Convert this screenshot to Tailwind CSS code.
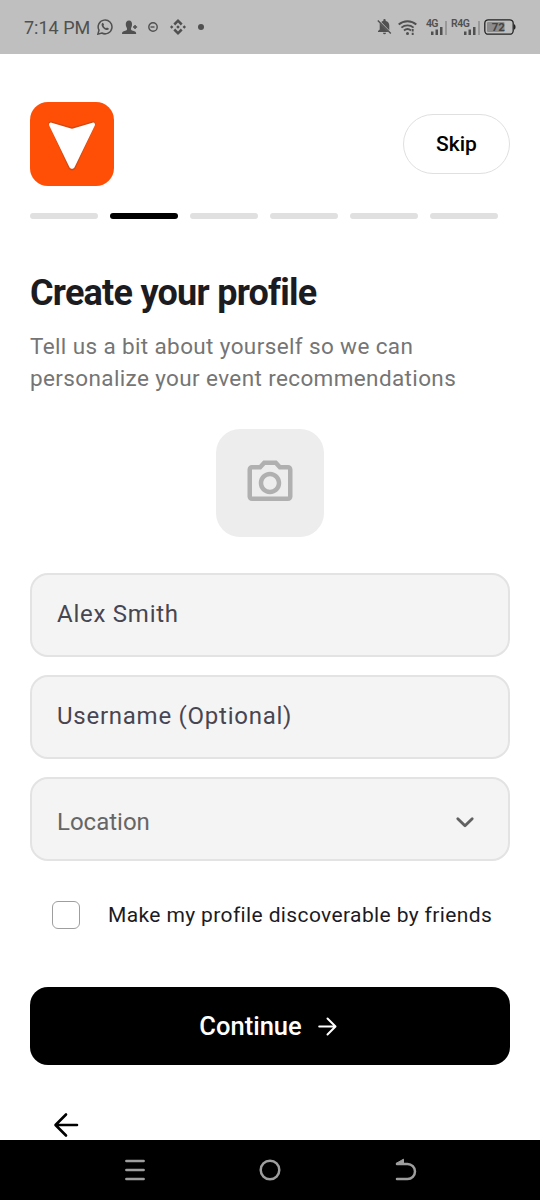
<!DOCTYPE html>
<html lang="en">
<head>
<meta charset="utf-8">
<meta name="viewport" content="width=device-width, initial-scale=1">
<title>Create your profile</title>
<script src="https://cdn.jsdelivr.net/npm/@tailwindcss/browser@4"></script>
</head>
<body class="bg-white">
<div class="flex h-[1200px] w-[540px] flex-col overflow-hidden bg-white font-['Roboto',sans-serif]">

  <!-- Status bar -->
  <header class="flex h-[54px] shrink-0 items-center justify-between bg-[#bfbfbf] pl-6 pr-[23px] text-[#505050]">
    <div class="flex items-center">
      <span class="w-[73px] pt-0.5 whitespace-nowrap text-[18px] leading-none">7:14 PM</span>
      <svg class="h-4 w-4" viewBox="0 0 16 16" fill="none" stroke="currentColor" stroke-width="1.500"><path d="M.9 15.100l1.100-3.900A6.900 6.900 0 1 1 4.800 14z"/><path d="M5 4.200l1-.5 1.100 2-.6 1c.5 1.100 1.300 1.900 2.500 2.500l1-.8 1.900 1-.3 1.200c-1.200 1-3.200.3-5-1.200C4.800 7.800 4 5.700 5 4.200z" fill="currentColor" stroke="none"/></svg>
      <svg class="ml-[9px] h-4 w-4" viewBox="0 0 16 16" fill="currentColor"><path d="M7 1.500c2.200 0 3.200 1.600 3 4.300C9.900 7.500 9.300 8.500 9 9.500c-.1 1.500.4 2 2 2.300 2.200.6 3.200 1 3.200 3.200H0c0-2.200 1-2.600 3.100-3.200 1.600-.3 2.100-.8 1.900-2.300-.3-1-1.100-2-1.200-3.700C3.600 3.100 4.800 1.500 7 1.500z"/><path d="M11 7.200h1.300V6h1.500v1.200h1.300v1.500h-1.300v1.300h-1.500V8.700H11z"/></svg>
      <svg class="ml-[10px] h-[10px] w-[10px]" viewBox="0 0 10 10" fill="none" stroke="currentColor" stroke-width="1.400"><circle cx="5" cy="5" r="4.200"/><path d="M2.500 5H6.500"/></svg>
      <svg class="ml-3 h-4 w-4" viewBox="0 0 16 16" fill="currentColor"><path d="M8 0l4.600 4.600-1.800 1.800L8 3.600 5.200 6.400 3.400 4.600zM8 16l4.600-4.600-1.800-1.800L8 12.400 5.200 9.600l-1.800 1.800zM8 6.200L9.800 8 8 9.800 6.200 8zM1.700 6.300L3.400 8 1.700 9.700 0 8zM14.300 6.300L16 8l-1.700 1.700L12.600 8z"/></svg>
      <span class="ml-3 size-[6px] rounded-full bg-[#505050]"></span>
    </div>
    <div class="flex items-center">
      <svg class="h-4 w-[15px]" viewBox="0 0 15 16" fill="currentColor"><path d="M4.300 2.900A4.300 4.300 0 0 1 6.300 2V1.200a1.200 1.200 0 0 1 2.400 0V2c2.200.5 3.600 2.300 3.600 4.600v4.600zM2.700 4.200L11.500 13H1v-1l1.700-1.600zM6 13.800h3a1.500 1.500 0 0 1-3 0z"/><path d="M.8 1.500l13 13" stroke="currentColor" stroke-width="1.400"/></svg>
      <svg class="ml-[6px] h-[15px] w-[19px]" viewBox="0 0 19 15" fill="none" stroke="currentColor" stroke-width="1.900"><path d="M.7 4.500c5-4.400 12.600-4.400 17.600 0M3.400 7.600c3.500-3 8.700-3 12.200 0M6 10.500c2-1.700 5-1.700 7 0"/><circle cx="9.500" cy="13.400" r="1.500" fill="currentColor" stroke="none"/><path d="M14.700 9v2.400M14.700 12.800v2.200"/></svg>
      <svg class="ml-[9px] h-[18px] w-[22px]" viewBox="0 0 22 18" fill="currentColor"><text x="0" y="9.300" font-family="Roboto" font-size="10.500" font-weight="600" textLength="12.500">4G</text><path d="M5 13.500h2.500V17H5zM9.500 11.500H12V17H9.500zM14 9h2.500v8H14z"/><path d="M19 3h2v14h-2z" fill="#999"/></svg>
      <svg class="ml-[3px] h-[18px] w-[30px]" viewBox="0 0 30 18" fill="currentColor"><text x="0" y="9.300" font-family="Roboto" font-size="10.500" font-weight="600" textLength="19">R4G</text><path d="M13 13.500h2.500V17H13zM17.500 11.500H20V17h-2.500zM22 9h2.500v8H22z"/><path d="M27 3h2v14h-2z" fill="#999"/></svg>
      <svg class="ml-[3px] h-4 w-[33px]" viewBox="0 0 33 16"><rect x=".8" y=".8" width="28.400" height="14.400" rx="3.500" fill="none" stroke="#222" stroke-width="1.300"/><rect x="3" y="3" width="17.500" height="10" rx="1" fill="#8c8c8c"/><path d="M30 5.300c2 .3 2 5.100 0 5.400z" fill="#222"/><text x="14.300" y="12" text-anchor="middle" font-family="Roboto" font-size="11.500" font-weight="700" fill="#444">72</text></svg>
    </div>
  </header>

  <main class="flex h-[1086px] shrink-0 flex-col px-[30px] pt-12">
    <div class="flex h-[84px] shrink-0 items-center justify-between">
      <svg class="h-[84px] w-[84px]" viewBox="0 0 84 84"><rect width="84" height="84" rx="18" fill="#ff4e06"/><path d="M21 21.800L42 27.700l21-5.900L43.200 65.400c-.6.900-1.800.9-2.400 0z" fill="#a34a22" stroke="#a34a22" stroke-width="4.800" stroke-linejoin="round" opacity=".5"/><path d="M21 22.600L42 29l21-6.400L42.600 64.700h-1.200z" fill="#fff" stroke="#fff" stroke-width="4" stroke-linejoin="round"/></svg>
      <button class="h-[60px] w-[107px] rounded-full border-[1.500px] border-[#e0e0e0] pt-0.5 text-[21px] font-medium text-black">Skip</button>
    </div>

    <!-- Step progress -->
    <div class="mt-[27px] flex shrink-0 gap-3">
      <i class="h-1.5 w-[68px] rounded-full bg-[#e0e0e0]"></i>
      <i class="h-1.5 w-[68px] rounded-full bg-black"></i>
      <i class="h-1.5 w-[68px] rounded-full bg-[#e0e0e0]"></i>
      <i class="h-1.5 w-[68px] rounded-full bg-[#e0e0e0]"></i>
      <i class="h-1.5 w-[68px] rounded-full bg-[#e0e0e0]"></i>
      <i class="h-1.5 w-[68px] rounded-full bg-[#e0e0e0]"></i>
    </div>

    <h1 class="mt-[50px] h-12 shrink-0 whitespace-nowrap text-[36px] leading-[48px] font-bold tracking-[-0.75px] text-[#1c1b1f]">Create your profile</h1>
    <p class="mt-[14px] shrink-0 whitespace-nowrap text-[22.5px] leading-[31.5px] tracking-[0.375px] text-[#757575]">Tell us a bit about yourself so we can<br>personalize your event recommendations</p>

    <div class="mt-[35px] flex h-[108px] w-[108px] shrink-0 items-center justify-center self-center rounded-[24px] bg-[#ededed]">
      <svg class="h-[54px] w-[54px]" viewBox="0 0 24 24" fill="#b0b0b0"><path d="M14.120 4l1.830 2H20v12H4V6h4.050l1.830-2h4.240M15 2H9L7.170 4H4c-1.100 0-2 .9-2 2v12c0 1.100.9 2 2 2h16c1.100 0 2-.9 2-2V6c0-1.100-.9-2-2-2h-3.170L15 2zm-3 7c1.650 0 3 1.350 3 3s-1.350 3-3 3-3-1.350-3-3 1.350-3 3-3m0-2c-2.760 0-5 2.240-5 5s2.240 5 5 5 5-2.240 5-5-2.240-5-5-5z"/></svg>
    </div>

    <div class="mt-[36px] flex shrink-0 flex-col gap-[18px]">
      <div class="flex h-[84px] items-center rounded-[18px] border-2 border-[#e3e3e3] bg-[#f4f4f4] px-[25px] pb-0.5 text-[24px] tracking-[0.75px] text-[#49454f]">Alex Smith</div>
      <div class="flex h-[84px] items-center rounded-[18px] border-2 border-[#e3e3e3] bg-[#f4f4f4] px-[25px] pb-0.5 text-[24px] tracking-[0.75px] text-[#49454f]">Username (Optional)</div>
      <div class="flex h-[84px] items-center justify-between rounded-[18px] border-2 border-[#e3e3e3] bg-[#f4f4f4] px-[25px] pt-[5px] text-[24px] text-[#666]">Location
        <svg class="h-9 w-9" viewBox="0 0 24 24" fill="none" stroke="#616161" stroke-width="1.900" stroke-linecap="round" stroke-linejoin="round"><path d="M7.200 9.800L12 14.500l4.800-4.700"/></svg>
      </div>
    </div>

    <label class="mt-[36px] flex h-9 shrink-0 items-center pl-[22px] text-[21px] tracking-[0.375px] text-[#1c1b1f]">
      <span class="mr-[28px] h-7 w-7 shrink-0 rounded-[6px] border-[1.5px] border-[#9e9e9e]"></span>
      <span class="whitespace-nowrap pt-px">Make my profile discoverable by friends</span>
    </label>

    <button class="mt-[54px] flex h-[78px] shrink-0 items-center justify-center gap-3 rounded-[18px] bg-black text-[25.5px] font-medium text-white">
      <span class="pt-px">Continue</span>
      <svg class="h-[27px] w-[27px]" viewBox="0 0 27 27" fill="none" stroke="#fff" stroke-width="2" stroke-linecap="round" stroke-linejoin="round"><path d="M5.200 13.500h16M13.500 5.500l8 8-8 8"/></svg>
    </button>

    <svg class="mt-[42px] ml-[18px] h-9 w-9 shrink-0" viewBox="0 0 36 36" fill="none" stroke="#000" stroke-width="2.600" stroke-linecap="round" stroke-linejoin="round"><path d="M29 18H8M18 7.500L7.500 18 18 28.500"/></svg>
  </main>

  <!-- System navigation -->
  <nav class="flex h-[60px] shrink-0 items-center justify-center gap-[111px] bg-black">
    <svg class="h-6 w-6" viewBox="0 0 24 24" stroke="#9e9e9e" stroke-width="2.600" stroke-linecap="round"><path d="M3.400 3h17.200M3.400 12h17.200M3.400 21h17.200"/></svg>
    <svg class="h-6 w-6" viewBox="0 0 24 24" fill="none" stroke="#9e9e9e" stroke-width="2.500"><circle cx="12" cy="12" r="9.300"/></svg>
    <svg class="h-6 w-6" viewBox="0 0 24 24" fill="none" stroke="#9e9e9e" stroke-width="2.500" stroke-linecap="round"><path d="M4 6h10.500a7.500 7.500 0 0 1 0 15H4"/><path d="M3.300 5.300L10.500 1.200v4.500z" fill="#9e9e9e" stroke="#9e9e9e" stroke-width="1" stroke-linejoin="round"/></svg>
  </nav>
</div>
</body>
</html>
